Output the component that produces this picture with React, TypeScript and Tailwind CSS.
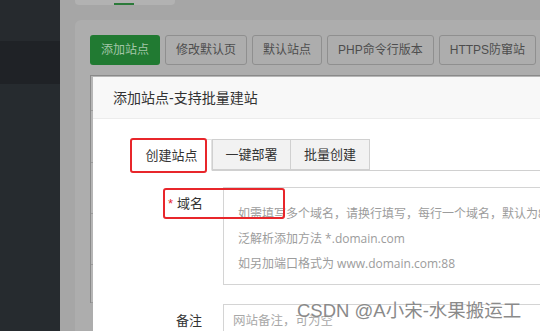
const font = "font-['Liberation_Sans','Noto_Sans_CJK_SC',sans-serif]"

const toolbarButtons = ["修改默认页", "默认站点", "PHP命令行版本", "HTTPS防窜站"]

function Sidebar() {
  return (
    <aside className="flex w-[60px] shrink-0 flex-col">
      <div className="h-[41px] bg-[#262a2e]" />
      <div className="h-[43px] bg-[#1f2226]" />
      <div className="flex-1 bg-[#262b2f]" />
    </aside>
  )
}

function Backdrop() {
  return (
    <main className="flex flex-1 flex-col pl-[15px]">
      <div className="h-[5px] w-[100px] rounded-b-[4px] bg-[#b2b2b2] pl-[39px] pt-[3px]">
        <div className="h-[2px] w-[20px] bg-[#2b7a3a]" />
      </div>
      <div className="mt-[15px] flex flex-1 flex-col rounded-tl-[6px] bg-[#adadad] pl-[15px] pt-[15px]">
        <div className="flex gap-[5px]">
          <button className="h-[30px] rounded-[3px] bg-[#217a32] px-[11px] text-[12px] whitespace-nowrap text-[#a3c6a8]">
            添加站点
          </button>
          {toolbarButtons.map(label => (
            <button key={label}
                    className="h-[30px] rounded-[3px] border border-[#8f8f8f] px-[10px] text-[12px] whitespace-nowrap text-[#4d4d4d]">
              {label}
            </button>
          ))}
        </div>
        <div className="mt-[10px] flex flex-col border-l border-t border-[#8a8a8a] bg-[#b6b6b6]">
          <div className="h-[35px] border-b border-[#9a9a9a]" />
          <div className="h-[52px] border-b border-[#9a9a9a]" />
          <div className="h-[51px] border-b border-[#9a9a9a]" />
          <div className="h-[51px] border-b border-[#9a9a9a]" />
          <div className="h-[38px] border-b border-[#9a9a9a]" />
        </div>
      </div>
    </main>
  )
}

function Tabs() {
  return (
    <div className="ml-[38px] flex border-b border-[#d0d0d0] pr-[40px]">
      <div className="relative -mb-px flex h-[32px] w-[81px] items-center justify-center border border-b-white border-[#e2e2e2] bg-white pt-[1px] text-[13px] text-[#333]">
        创建站点
        <div className="absolute left-[-2px] top-[-2px] h-[35px] w-[77px] rounded-[3px] border-2 border-[#e8262b]" />
      </div>
      <div className="flex h-[31px] w-[79px] items-center justify-center border border-[#d0d0d0] bg-[#f2f2f2] pt-[1px] text-[13px] text-[#333]">
        一键部署
      </div>
      <div className="flex h-[31px] w-[79px] items-center justify-center border border-l-0 border-[#d0d0d0] bg-[#f2f2f2] pt-[1px] text-[13px] text-[#333]">
        批量创建
      </div>
    </div>
  )
}

function Modal() {
  return (
    <div className="absolute left-[93px] top-[77px] flex h-[300px] w-[520px] flex-col bg-white">
      <div className="flex h-[42px] items-center border-b border-[#ececec] bg-[#f8f8f8] pl-[20px] pt-[1px] text-[14px] text-[#333]">
        添加站点-支持批量建站
      </div>
      <div className="flex flex-col pt-[20px]">
        <Tabs/>
        <div className="relative mt-[16px] flex">
          <label className="flex h-[32px] w-[130px] shrink-0 items-center justify-end pr-[20px] pt-[2px] text-[13px] text-[#333]">
            <span className="mr-[4px] text-[#e8262b]">*</span>域名
          </label>
          <textarea
            className="h-[98px] w-[400px] resize-none border border-[#d4d4d4] px-[14px] pt-[13px] font-['Open_Sans','Noto_Sans_CJK_SC',sans-serif] text-[12px] leading-[25px] whitespace-pre outline-none placeholder:text-[#9c9c9c]"
            placeholder={"如需填写多个域名，请换行填写，每行一个域名，默认为80端口\n泛解析添加方法 *.domain.com\n如另加端口格式为 www.domain.com:88"}
          />
          <div className="absolute left-[70px] top-[1px] h-[31px] w-[122px] rounded-[3px] border-2 border-[#e8262b]" />
        </div>
        <div className="mt-[19px] flex">
          <label className="flex h-[32px] w-[130px] shrink-0 items-center justify-end pr-[21px] pt-[2px] text-[13px] text-[#333]">
            备注
          </label>
          <input
            className="h-[32px] w-[400px] border border-[#d4d4d4] px-[9px] pt-[2px] text-[12.5px] outline-none placeholder:text-[#a8a8a8]"
            placeholder="网站备注，可为空"
          />
        </div>
      </div>
    </div>
  )
}

export default function App() {
  return (
    <div className={`relative flex h-[331px] w-[540px] overflow-hidden bg-[#a6a6a6] ${font}`}>
      <Sidebar/>
      <Backdrop/>
      <Modal/>
      <div className="absolute left-[297px] top-[297px] text-[18.5px] whitespace-nowrap text-[#8a8a8a] [text-shadow:0_0_2px_#ffffff]">
        CSDN @A小宋-水果搬运工
      </div>
    </div>
  )
}
